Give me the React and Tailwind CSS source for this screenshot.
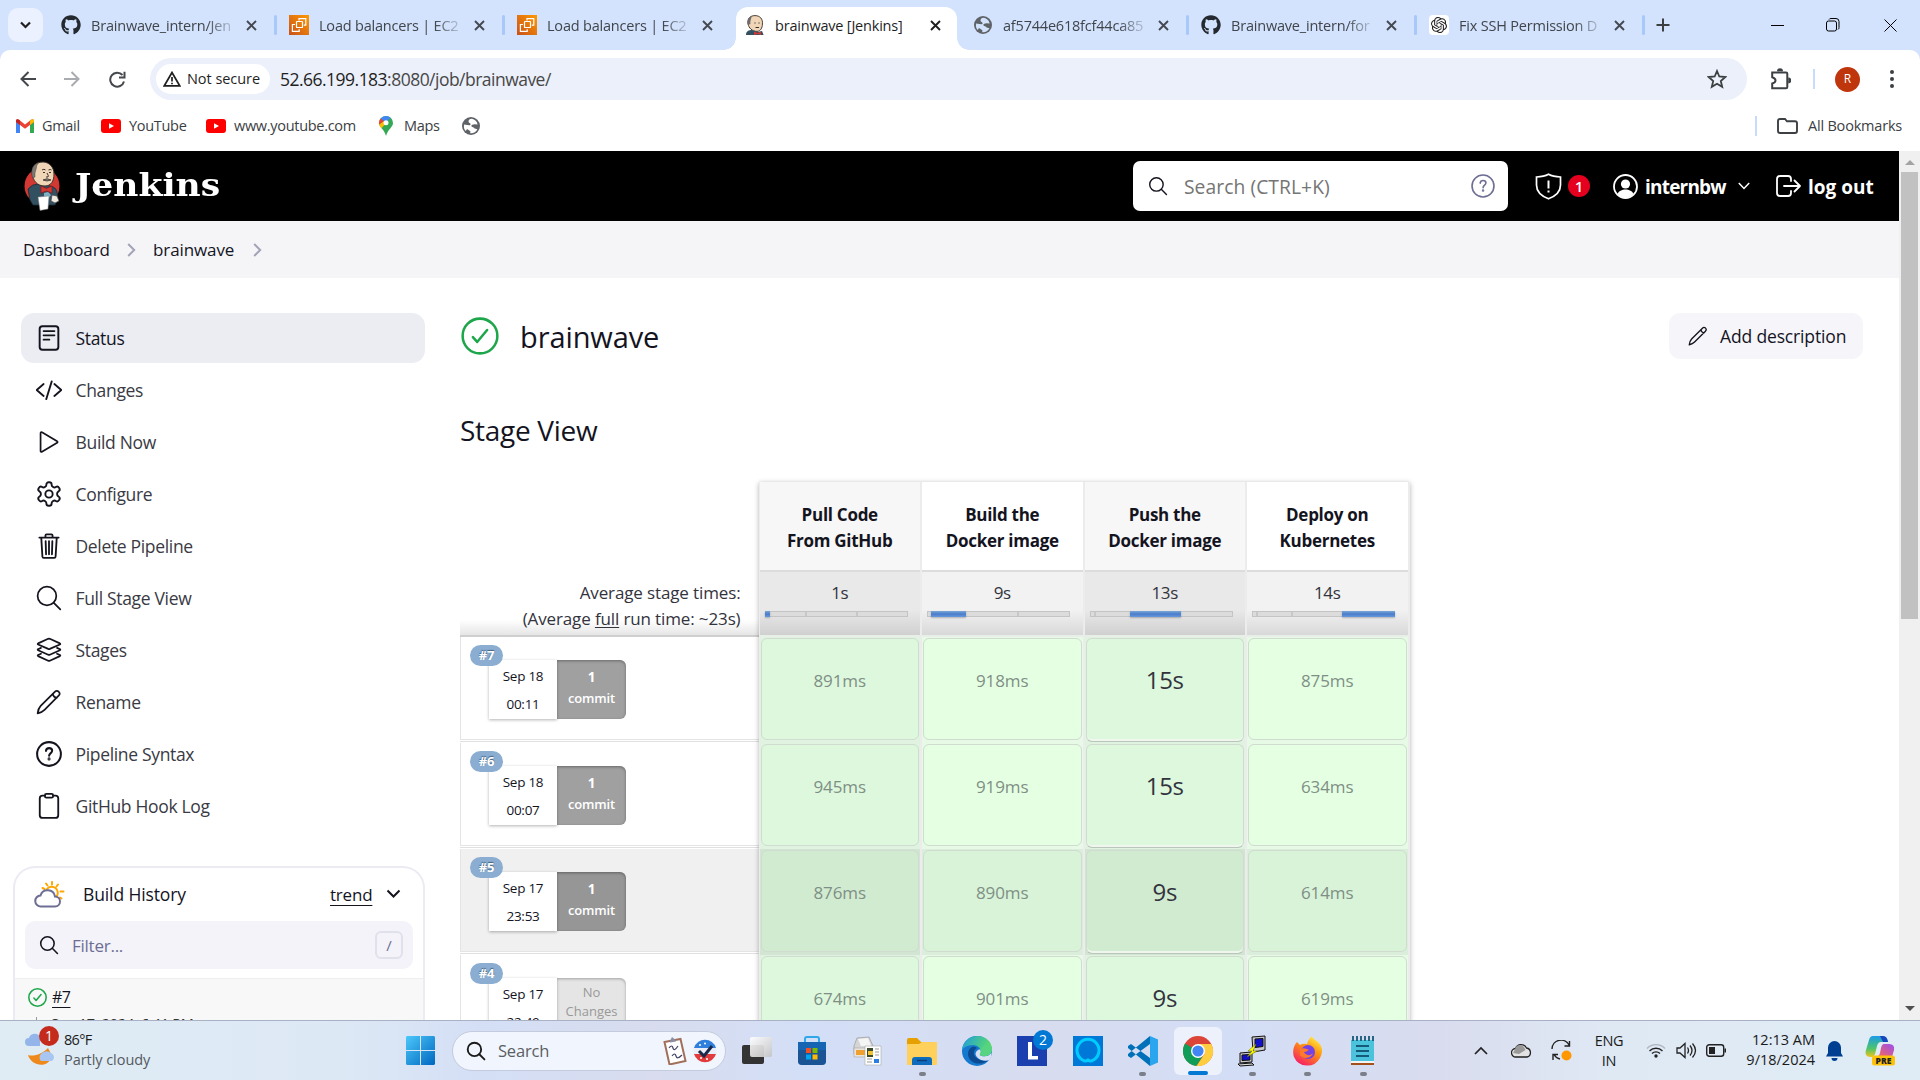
import React from "react";
import { SiOpenai } from "react-icons/si";
import { FaGithub } from "react-icons/fa";

/* ---------- shared bits ---------- */

const T = ({ c = "", children }) => <span className={`block shrink-0 whitespace-nowrap ${c}`}>{children}</span>;

const Line = ({ s = 26, w = 32, c = "", children }) => (
  <svg width={s} height={s} viewBox="0 0 512 512" fill="none" stroke="currentColor" strokeWidth={w} strokeLinecap="round" strokeLinejoin="round" className={`shrink-0 ${c}`}>
    {children}
  </svg>
);

const Pencil = ({ s, c }) => (
  <Line s={s} c={c} w={34}>
    <path d="M32 480c8-60 20-104 60-146L370 56c22-22 56-22 78-2 22 22 20 56-2 78L168 410c-40 40-80 56-136 70zM330 96c8 44 36 72 80 80" />
  </Line>
);
const Glass = ({ s, c, w }) => (
  <Line s={s} c={c} w={w}>
    <circle cx="216" cy="216" r="172" />
    <path d="M340 340l132 132" />
  </Line>
);
const Help = ({ s, c, w = 34 }) => (
  <Line s={s} c={c} w={w}>
    <circle cx="256" cy="256" r="234" />
    <path d="M196 196c4-40 36-56 62-56 32 0 60 20 60 54 0 44-60 46-60 98" />
    <circle cx="257" cy="352" r="10" fill="currentColor" />
  </Line>
);
const Check = ({ s, w = 32, c }) => (
  <Line s={s} w={w} c={c}>
    <circle cx="256" cy="256" r="234" />
    <path d="M352 176L217.6 336 160 272" />
  </Line>
);

/* ---------- tab strip ---------- */

const Aws = () => (
  <svg width="20" height="20" viewBox="0 0 20 20">
    <defs>
      <linearGradient id="aws" x1="0" y1="1" x2="1" y2="0">
        <stop offset="0" stopColor="#c8511b" />
        <stop offset="1" stopColor="#f90" />
      </linearGradient>
    </defs>
    <rect width="20" height="20" fill="url(#aws)" />
    <g fill="none" stroke="#fff" strokeWidth="1.2">
      <rect x="7.5" y="6.5" width="6" height="6" rx="0.6" />
      <path d="M10 5.5V3.6h6.8v6.6h-2M6 9.5H3.4v6.9h6.8v-2.2" />
    </g>
  </svg>
);

const Globe = ({ land = "#d3e3fd" }) => (
  <svg width="18" height="18" viewBox="0 0 18 18">
    <circle cx="9" cy="9" r="9" fill="#5f6368" />
    <path d="M9.8 1.8c-2.6.2-3.6 1.6-3.2 3.2.4 1.2 2 .8 2 2.2 0 1.2-2 1-3.4.8L2.2 7.4c-.8 2.8 0 5 1.6 6.600L5 12l3.400 2.200-.2 2c3 .4 5.800-1.200 7.200-4l-2.800-.6c-.6-1.600-2.400-1.200-3.200-2.400-.4-1.600 1.600-1.800 3.200-2l3 .2C15 4.400 13 2.400 9.800 1.800z" fill={land} />
  </svg>
);

const JenkinsHead = () => (
  <svg width="18" height="20" viewBox="0 0 18 20">
    <path d="M2 9C1 4 4 .6 9 .6S17 4 16.400 9c0 4-2 7.400-5.400 7.400C6 16.400 3 13 2 9z" fill="#f0d6b7" stroke="#4a3c33" strokeWidth="1" />
    <path d="M2 10C1 5 3 1.500 6 1 5 4 4 6 4.400 9z" fill="#6d6b6d" />
    <path d="M9 7.500v1M13 7.500v1M9.500 12.500h3.500" stroke="#333" strokeWidth="1.200" />
    <path d="M0 20c0-4 3-5 6-5l6 2 4-1 1.600 4z" fill="#335061" />
    <path d="M8 16.500l3.500 1.500 3.500-1.500v3.500l-3.500-1L8 20z" fill="#d33833" />
  </svg>
);

const XIcon = ({ c = "text-[#3c4043]" }) => (
  <svg width="11" height="11" viewBox="0 0 11 11" className={`shrink-0 ${c}`}>
    <path d="M1 1l9 9M10 1l-9 9" stroke="currentColor" strokeWidth="1.900" />
  </svg>
);

const tabs = [
  { icon: <FaGithub size={20} color="#24292f" />, text: "Brainwave_intern/Jen", sep: true },
  { icon: <Aws />, text: "Load balancers | EC2", sep: true },
  { icon: <Aws />, text: "Load balancers | EC2" },
  { icon: <JenkinsHead />, text: "brainwave [Jenkins]", active: true },
  { icon: <Globe />, text: "af5744e618fcf44ca85", sep: true },
  { icon: <FaGithub size={20} color="#24292f" />, text: "Brainwave_intern/for", sep: true },
  {
    icon: (
      <span className="flex h-5 w-5 items-center justify-center rounded bg-white">
        <SiOpenai size={16} color="#222" />
      </span>
    ),
    text: "Fix SSH Permission D",
    sep: true,
  },
];

function TabStrip() {
  return (
    <div className="flex h-[50px] shrink-0 items-center bg-[#d3e3fd]">
      <div className="ml-2 flex h-[34px] w-[35px] items-center justify-center rounded-[10px] bg-[#ebf1fe]">
        <svg width="11" height="8" viewBox="0 0 11 8">
          <path d="M1 1.500l4.500 4.500L10 1.500" fill="none" stroke="#1f1f1f" strokeWidth="2.200" />
        </svg>
      </div>
      <div className="ml-[6px] flex h-full">
        {tabs.map((t, i) => (
          <div key={i} className="relative flex h-full w-[228px] items-center">
            {t.active && (
              <>
                <div className="absolute bottom-0 left-[3px] h-[43px] w-[221px] rounded-t-[12px] bg-white" />
                <div className="absolute bottom-0 -left-[9px] h-3 w-3 bg-[radial-gradient(circle_at_0_0,#d3e3fd_11.500px,#fff_12px)]" />
                <div className="absolute bottom-0 left-[224px] h-3 w-3 bg-[radial-gradient(circle_at_100%_0,#d3e3fd_11.500px,#fff_12px)]" />
              </>
            )}
            <div className="relative ml-3 flex w-5 shrink-0 justify-center">{t.icon}</div>
            <div className={`relative ml-[10px] w-[141px] whitespace-nowrap pt-px text-[14.500px] leading-5 tracking-[-0.200px] ${t.active ? "text-[#1f1f1f]" : "text-[#41454b] [mask-image:linear-gradient(90deg,#000_82%,rgba(0,0,0,0.300)_97%)]"}`}>{t.text}</div>
            <div className="relative ml-[14px]">
              <XIcon c={t.active ? "text-[#1f1f1f]" : "text-[#45494f]"} />
            </div>
            {t.sep && <div className="ml-[17px] h-5 w-[3px] rounded bg-[#a8c7fa]" />}
          </div>
        ))}
      </div>
      <svg width="14" height="14" viewBox="0 0 14 14" className="ml-[11px]">
        <path d="M7 .5v13M.5 7h13" stroke="#3c4043" strokeWidth="2" />
      </svg>
      <div className="ml-auto flex items-center">
        <svg width="13" height="13" viewBox="0 0 13 13">
          <path d="M0 6.500h13" stroke="#000" />
        </svg>
        <svg width="14" height="14" viewBox="0 0 14 14" className="ml-[42px]" fill="none" stroke="#000">
          <rect x=".5" y="3" width="10" height="10" rx="2" />
          <path d="M3 1.500q.5-1 2-1h5q3 0 3 3v6q0 1.500-1 2" />
        </svg>
        <svg width="13" height="13" viewBox="0 0 13 13" className="mr-[23px] ml-[44px]">
          <path d="M.5.5l12 12M12.500.5l-12 12" stroke="#000" />
        </svg>
      </div>
    </div>
  );
}

/* ---------- toolbar & bookmarks ---------- */

function Toolbar() {
  return (
    <div className="shrink-0 bg-[#d3e3fd]">
      <div className="flex h-[58px] items-center rounded-t-[10px] bg-white text-[#44474b]">
        <svg width="16" height="16" viewBox="0 0 16 16" className="ml-5" fill="none" stroke="currentColor" strokeWidth="2">
          <path d="M16 8H1.500M8.500 1L1.500 8l7 7" />
        </svg>
        <svg width="16" height="16" viewBox="0 0 16 16" className="ml-[28px] text-[#a8abaf]" fill="none" stroke="currentColor" strokeWidth="2">
          <path d="M0 8h14.500M7.500 1l7 7-7 7" />
        </svg>
        <svg width="17" height="17" viewBox="0 0 17 17" className="ml-[29px]" fill="none" stroke="currentColor" strokeWidth="2">
          <path d="M15 10.500a7 7 0 11-1.500-6.500M15.500 .8v5.700H10" />
        </svg>
        <div className="ml-[24px] flex h-[42px] w-[1597px] items-center rounded-full bg-[#ecf0fa]">
          <div className="ml-[6px] flex h-[30px] w-[114px] items-center rounded-full bg-white">
            <svg width="18" height="16" viewBox="0 0 18 16" className="ml-[7px]" fill="none" stroke="#1f1f1f" strokeWidth="1.700">
              <path d="M9 1.500L1.300 14.800h15.400zM9 6v4.500M9 11.700v1.600" />
            </svg>
            <T c="ml-[6px] text-[14.500px] tracking-[-0.050px] text-[#1f1f1f]">Not secure</T>
          </div>
          <T c="ml-[10px] pt-px text-[17.500px] tracking-[-0.520px] text-[#474747]">
            <span className="text-[#1f1f1f]">52.66.199.183</span>:8080/job/brainwave/
          </T>
          <svg width="20" height="20" viewBox="0 0 20 20" className="mr-5 ml-auto" fill="none" stroke="#3c4043" strokeWidth="1.800">
            <path d="M10 2l2.300 5.500 6 .5-4.500 4 1.400 5.800L10 14.700l-5.200 3.100L6.200 12 1.700 8l6-.5z" />
          </svg>
        </div>
        <svg width="21" height="22" viewBox="0 0 21 22" className="ml-[23px]" fill="none" stroke="#3c4043" strokeWidth="2">
          <path d="M2.200 4.500H16q1.300 0 1.300 1.300V19q0 1.300-1.300 1.300H2.200V15.500q3.300-.8 3.300-3t-3.300-3.200z" />
          <path d="M8 3.300a2 2 0 014 0M18.300 10.500a2 2 0 010 4" fill="#3c4043" />
        </svg>
        <div className="ml-[22px] h-5 w-[2px] bg-[#c7dcfb]" />
        <div className="ml-5 flex h-[25px] w-[25px] items-center justify-center rounded-full bg-[#bf360c] text-[12px] text-white">R</div>
        <svg width="6" height="20" viewBox="0 0 6 20" className="ml-[29px]" fill="#3c4043">
          <circle cx="3" cy="3" r="2" />
          <circle cx="3" cy="10" r="2" />
          <circle cx="3" cy="17" r="2" />
        </svg>
      </div>
    </div>
  );
}

const YT = ({ c = "" }) => (
  <svg width="20" height="14" viewBox="0 0 20 14" className={`shrink-0 ${c}`}>
    <rect width="20" height="14" rx="3" fill="#f00" />
    <path d="M8 4.200v5.600L13 7z" fill="#fff" />
  </svg>
);

function Bookmarks() {
  return (
    <div className="flex h-[43px] shrink-0 items-center bg-white pb-[7px] text-[14.500px] leading-5 tracking-[-0.300px] text-[#3c4043]">
      <svg width="18" height="14" viewBox="0 0 18 14" className="ml-4">
        <path d="M0 1.500V14h4V6z" fill="#4285f4" />
        <path d="M18 1.500V14h-4V6z" fill="#34a853" />
        <path d="M0 1.500C0 .5 1.500-.5 3 .8l6 4.700 6-4.700C16.500-.5 18 .5 18 1.500V3L9 9.700 0 3z" fill="#ea4335" />
        <path d="M14 1.600l1-.8C16.500-.5 18 .5 18 1.500V3l-4 3z" fill="#fbbc04" />
        <path d="M0 1.500C0 .5 1.500-.5 3 .8l1 .8V6L0 3z" fill="#c5221f" />
      </svg>
      <T c="ml-2 w-[59px]">Gmail</T>
      <YT />
      <T c="ml-2 w-[77px]">YouTube</T>
      <YT />
      <T c="ml-2 w-[145px]">www.youtube.com</T>
      <svg width="14" height="20" viewBox="0 0 14 20">
        <path d="M0 7a7 7 0 0114 0c0 4-5 6-7 13C5 13 0 11 0 7z" fill="#34a853" />
        <path d="M7 0A7 7 0 001.600 2.500L7 7l4.500-5.400A7 7 0 007 0z" fill="#4285f4" />
        <path d="M1.600 2.500A7 7 0 00.200 8.500L5 5.300z" fill="#ea4335" />
        <path d="M.2 8.500c.4 1.500 1.300 2.600 2.300 3.800L9 5 5 5.300z" fill="#fbbc04" />
        <circle cx="7" cy="6.800" r="2.500" fill="#fff" />
      </svg>
      <T c="ml-[11px] w-[58px]">Maps</T>
      <Globe land="#fff" />
      <div className="ml-auto h-5 w-[2px] bg-[#c7dcfb]" />
      <svg width="21" height="16" viewBox="0 0 21 16" className="ml-5" fill="none" stroke="#3c4043" strokeWidth="1.900">
        <path d="M1 3q0-2 2-2h5l2 2.300h8q2 0 2 2V13q0 2-2 2H3q-2 0-2-2z" />
      </svg>
      <T c="ml-[10px] w-[112px] tracking-[-0.200px]">All Bookmarks</T>
    </div>
  );
}

/* ---------- Jenkins header ---------- */

const Mascot = () => (
  <svg width="36" height="50" viewBox="0 0 36 50">
    <ellipse cx="18" cy="25" rx="17.500" ry="18" fill="#d33833" />
    <path d="M4 28q4-5 10-5l12 2q6 1 7 6l1 6-3 7H9L6 39z" fill="#335061" stroke="#1d2b33" strokeWidth=".8" />
    <path d="M8 12C8 4 13 1 19 1s11 5 11 12-3 12-9 12C13 25 9 20 8 12z" fill="#f0d6b7" stroke="#3b3029" strokeWidth="1" />
    <path d="M8.500 17C6.500 8 9 3.500 15 1.600c-2 2-2.500 3-2.500 5L11 12v4z" fill="#7d7a76" stroke="#3b3029" strokeWidth=".4" />
    <path d="M18 9q2-1.500 3.500 0M24.500 9q2-1 3 0M19 11.500h2M25 11.500h2M23 12q2 3 1 4h-2" fill="none" stroke="#3b3029" strokeWidth="1" />
    <path d="M19 19q4-2.500 8 0-4 2-8 0z" fill="#8b8680" stroke="#3b3029" strokeWidth=".8" />
    <path d="M17 25l5.500 2.500L28 25v7l-5.500-2L17 32z" fill="#d33833" stroke="#811" strokeWidth=".6" />
    <path d="M20 32l4-1 3 3-3 4-4-2z" fill="#81b0c4" />
    <path d="M14 36l11-1-1 13-8 1.500z" fill="#fff" stroke="#777" strokeWidth=".5" />
    <path d="M28 34l5 1 2 5-4 2-4-2z" fill="#efe9e2" stroke="#444" strokeWidth=".7" />
  </svg>
);

function JenkinsHeader() {
  return (
    <div className="flex h-[70px] shrink-0 items-center bg-black text-white">
      <div className="ml-6">
        <Mascot />
      </div>
      <div className="ml-[15px] w-[1058px]">
        <T c="w-[136px] origin-left scale-x-[1.080] pb-[3px] font-['DejaVu_Serif'] text-[32px] font-bold">Jenkins</T>
      </div>
      <div className="flex h-[50px] w-[375px] items-center rounded-[7px] bg-white text-[#14141f]">
        <Glass s={20} w={36} c="ml-[15px]" />
        <T c="ml-[16px] pt-[3px] text-[19.300px] tracking-[0.050px] text-[#757575]">Search (CTRL+K)</T>
        <Help s={24} c="mr-[13px] ml-auto text-[#6e6e94]" />
      </div>
      <svg width="27" height="27" viewBox="0 0 27 27" className="ml-[27px]" fill="none" stroke="#fff" strokeWidth="1.700">
        <path d="M13.500 1.300Q9 3.800 1.500 4v8c0 7 6 11.500 12 13.800 6-2.300 12-6.800 12-13.800V4Q18 3.800 13.500 1.300z" />
        <path d="M13.500 7.500v8M13.500 17.500v2" strokeWidth="2" />
      </svg>
      <div className="ml-[6px] flex h-[22px] w-[22px] items-center justify-center rounded-full bg-[#e6001f] text-[15px] font-semibold">1</div>
      <svg width="25" height="25" viewBox="0 0 25 25" className="ml-[23px]">
        <circle cx="12.500" cy="12.500" r="11.500" fill="none" stroke="#fff" strokeWidth="1.800" />
        <circle cx="12.500" cy="10" r="4.600" fill="#fff" />
        <path d="M4.500 20c2-6 14-6 16 0a11 11 0 01-16 0z" fill="#fff" />
      </svg>
      <T c="ml-[7px] w-[93px] pt-[2px] text-[19px] font-bold tracking-[-0.800px]">internbw</T>
      <svg width="12" height="8" viewBox="0 0 12 8" fill="none" stroke="#fff" strokeWidth="1.500">
        <path d="M.8 1L6 6.500 11.200 1" />
      </svg>
      <svg width="25" height="22" viewBox="0 0 25 22" className="ml-[26px]" fill="none" stroke="#fff" strokeWidth="1.800" strokeLinecap="round" strokeLinejoin="round">
        <path d="M15 6V4q0-3-3-3H4Q1 1 1 4v14q0 3 3 3h8q3 0 3-3v-2M8 11h16M18.500 5.500L24 11l-5.500 5.500" />
      </svg>
      <T c="ml-[7px] pt-[2px] text-[19px] font-bold">log out</T>
    </div>
  );
}

const Crumb = () => (
  <svg width="9" height="14" viewBox="0 0 9 14" fill="none" stroke="#a3a3b8" strokeWidth="2">
    <path d="M1.200 1l6 6-6 6" />
  </svg>
);

/* ---------- sidebar ---------- */

const nav = [
  ["Status", <Line w={38}><rect x="72" y="26" width="368" height="460" rx="54" /><path d="M150 120h212M150 204h212M150 288h112" /></Line>],
  ["Changes", <Line w={36}><path d="M150 374L14 256l136-118M362 374l136-118-136-118M310 86l-108 350" /></Line>],
  ["Build Now", <Line w={34}><path d="M90 81v350c0 16 14 26 28 17l298-176c12-7 12-25 0-32L118 64c-14-9-28 1-28 17z" /></Line>],
  ["Configure", <svg width="26" height="26" viewBox="1 1 22 22" fill="none" stroke="currentColor" strokeWidth="1.600"><path d="M12.220 2h-.44a2 2 0 0 0-2 2v.18a2 2 0 0 1-1 1.730l-.43.250a2 2 0 0 1-2 0l-.15-.08a2 2 0 0 0-2.730.73l-.22.380a2 2 0 0 0 .73 2.730l.15.100a2 2 0 0 1 1 1.720v.510a2 2 0 0 1-1 1.740l-.15.090a2 2 0 0 0-.73 2.730l.22.380a2 2 0 0 0 2.730.73l.15-.08a2 2 0 0 1 2 0l.43.250a2 2 0 0 1 1 1.730V20a2 2 0 0 0 2 2h.44a2 2 0 0 0 2-2v-.18a2 2 0 0 1 1-1.730l.43-.25a2 2 0 0 1 2 0l.15.080a2 2 0 0 0 2.730-.73l.22-.39a2 2 0 0 0-.73-2.730l-.15-.08a2 2 0 0 1-1-1.740v-.5a2 2 0 0 1 1-1.740l.15-.09a2 2 0 0 0 .73-2.730l-.22-.38a2 2 0 0 0-2.730-.73l-.15.080a2 2 0 0 1-2 0l-.43-.25a2 2 0 0 1-1-1.730V4a2 2 0 0 0-2-2z" /><circle cx="12" cy="12" r="3.100" /></svg>],
  ["Delete Pipeline", <Line w={36}><path d="M104 96l22 366c1 18 12 28 28 28h204c16 0 27-10 28-28l22-366M66 90h380M186 88V48c0-14 10-22 22-22h96c12 0 22 8 22 22v40M256 160v260M190 160l8 260M322 160l-8 260" /></Line>],
  ["Full Stage View", <Line w={34}><circle cx="216" cy="216" r="184" /><path d="M350 350l128 128" /></Line>],
  ["Stages", <Line w={34}><path d="M470 126L272 36c-10-4-22-4-32 0L42 126c-12 6-12 14 0 20l198 88c10 4 22 4 32 0l198-88c12-6 12-14 0-20zM42 238l-4 4c-8 6-6 12 4 18l198 88c10 4 22 4 32 0l198-88c10-6 12-12 4-18l-60-28M98 214l-60 28M98 330l-56 26c-12 6-12 14 0 20l198 90c10 4 22 4 32 0l198-90c12-6 12-14 0-20l-56-26" /></Line>],
  ["Rename", <Pencil s={26} />],
  ["Pipeline Syntax", <Help s={26} w={40} />],
  ["GitHub Hook Log", <Line w={36}><path d="M176 50h-48c-30 0-54 22-54 52v334c0 30 24 54 54 54h256c30 0 54-24 54-54V102c0-30-24-52-54-52h-48" /><rect x="176" y="18" width="160" height="72" rx="28" /></Line>],
];

function Sidebar() {
  return (
    <div className="flex w-[425px] shrink-0 flex-col text-[#14141f]">
      <nav className="ml-[21px] mt-[35px] flex flex-col gap-[2px]">
        {nav.map(([label, icon], i) => (
          <div key={label} className={`flex h-[50px] items-center rounded-[13px] pl-[15px] ${i === 0 ? "bg-[#ecedf3]" : ""}`}>
            {icon}
            <T c={`ml-[13.500px] pt-px text-[17.500px] tracking-[-0.330px] ${i === 0 ? "font-medium" : "text-[#3a3a44]"}`}>{label}</T>
          </div>
        ))}
      </nav>
      <div className="ml-[13px] mt-[35px] h-[200px] rounded-t-[22px] border-2 border-b-0 border-[#ebebf3]">
        <div className="flex h-[52px] items-center">
          <svg width="31" height="27" viewBox="0 0 31 27" className="ml-[19px]" fill="none" strokeWidth="2" strokeLinecap="round">
            <g stroke="#fea700">
              <path d="M13 8a6 6 0 019.500 7.500M18 1v2.500M12 2.500l1.500 2M8.500 7l2 1M24 3.500l-1.500 2M29.500 10.500h-3M26 16.500l1.500 1" />
            </g>
            <path d="M7 25.500a5.500 5.500 0 01-.5-11A7.500 7.500 0 0121 15.500a5 5 0 010 10z" stroke="#6e6e94" />
          </svg>
          <T c="ml-[18px] w-[247px] pt-px text-[17.500px] font-medium tracking-[-0.120px]">Build History</T>
          <T c="w-[43px] pt-px text-[17px] font-medium tracking-[-0.200px] underline decoration-1 underline-offset-4">trend</T>
          <svg width="15" height="10" viewBox="0 0 15 10" className="ml-[13px]" fill="none" stroke="#14141f" strokeWidth="2">
            <path d="M1.500 1.500l6 6 6-6" />
          </svg>
        </div>
        <div className="ml-[10px] mt-[1px] flex h-[48px] w-[388px] items-center rounded-[10px] bg-[#f3f3f9]">
          <Glass s={20} w={40} c="ml-[14px]" />
          <T c="ml-[13px] pt-px text-[17px] font-medium tracking-[-0.250px] text-[#6e6e94]">Filter...</T>
          <div className="mr-[10px] ml-auto flex h-7 w-7 items-center justify-center rounded-md border-2 border-[#e1e1ec] text-[15px] text-[#6e6e94]">/</div>
        </div>
        <div className="mt-[9px] h-[60px] border-t border-[#eee] bg-[#f8f8f8] pl-[13px] pt-[6px]">
          <div className="flex h-6 items-center">
            <Check s={19} w={42} c="text-[#1ea64b]" />
            <T c="ml-[5px] text-[16px] font-medium tracking-[-0.500px] underline decoration-1 underline-offset-4">#7</T>
          </div>
          <div className="mt-[5px] flex items-start">
            <div className="ml-[8px] mt-[3px] h-3 w-[1px] bg-[#999]" />
            <T c="ml-[14px] text-[14.500px] leading-5 tracking-[-0.250px] text-[#333]">Sep 17, 2024, 6:41 PM</T>
          </div>
        </div>
      </div>
    </div>
  );
}

/* ---------- stage view ---------- */

const stages = [
  { name: ["Pull Code", "From GitHub"], avg: "1s", from: 0, len: 5, ticks: [40, 91] },
  { name: ["Build the", "Docker image"], avg: "9s", from: 4, len: 35, ticks: [90] },
  { name: ["Push the", "Docker image"], avg: "13s", from: 40, len: 51, ticks: [4] },
  { name: ["Deploy on", "Kubernetes"], avg: "14s", from: 90, len: 53, ticks: [4, 39] },
];

const runs = [
  { id: "#7", day: "Sep 18", time: "00:11", commit: true, cells: ["891ms", "918ms", "15s", "875ms"] },
  { id: "#6", day: "Sep 18", time: "00:07", commit: true, cells: ["945ms", "919ms", "15s", "634ms"] },
  { id: "#5", day: "Sep 17", time: "23:53", commit: true, hover: true, cells: ["876ms", "890ms", "9s", "614ms"] },
  { id: "#4", day: "Sep 17", time: "22:49", cells: ["674ms", "901ms", "9s", "619ms"] },
];

const RunInfo = ({ r }) => (
  <div className="h-[106px] pb-px">
    <div className={`flex h-[103px] flex-col border border-r-0 border-t-0 border-[#e4e4e4] pl-[9px] pt-[8px] ${r.hover ? "bg-[#f0f0f0]" : "bg-white"}`}>
      <div className="relative z-10 flex h-[21px] w-[33px] shrink-0 items-center justify-center rounded-full bg-[#8aadd1] text-[13px] font-bold tracking-[-0.200px] text-white [text-shadow:0_-1px_1px_#44607f]">{r.id}</div>
      <div className="-mt-[6px] ml-[19px] flex h-[59px] shrink-0">
        <div className="w-[68px] bg-white pt-[2px] text-center text-[13.500px] leading-[28px] tracking-[-0.250px] shadow-[0_1px_3px_rgba(0,0,0,0.300)]">
          <div>{r.day}</div>
          <div>{r.time}</div>
        </div>
        {r.commit ? (
          <div className={`w-[69px] rounded-r-[6px] pt-[7px] text-center text-[13.500px] font-bold leading-[21px] text-white shadow-[inset_0_1px_3px_rgba(0,0,0,0.350)] ${r.hover ? "bg-[#969696]" : "bg-[#a0a0a0]"}`}>
            <div>1</div>
            <div className="text-[13px] font-semibold tracking-[-0.200px]">commit</div>
          </div>
        ) : (
          <div className="w-[69px] rounded-r-[6px] bg-[#e5e5e5] pt-[5px] text-center text-[13px] leading-[19px] text-[#999] shadow-[inset_0_1px_3px_rgba(0,0,0,0.300)]">
            No
            <br />
            Changes
          </div>
        )}
      </div>
    </div>
    <div className="mt-px h-px bg-[#e0e0e0]" />
  </div>
);

const Bar = ({ s }) => (
  <div className="relative mt-[6px] ml-[5px] h-[6px] w-[143px] border border-[#c4c4c4] bg-[#dcdcdc]">
    {s.ticks.map((x) => (
      <div key={x} className="absolute top-0 h-full w-[2px] bg-[#c8c8c8]" style={{ left: x - 1 }} />
    ))}
    <div className="absolute -top-[1px] h-[6px] bg-linear-to-b from-[#7ba7d6] via-[#4a7ccb] to-[#6699dd] shadow-[0_1px_2px_rgba(0,0,0,0.250)]" style={{ left: s.from - 1, width: s.len }} />
  </div>
);

const StageColumn = ({ s, i }) => {
  const odd = i % 2 === 0;
  return (
    <div className="flex w-[162.500px] flex-col border-r-2 border-[#ececec]">
      <div className={`flex h-[90px] flex-col items-center justify-center border-b-2 border-[#dcdcdc] pt-[4px] text-center text-[17px] font-bold leading-[26px] tracking-[-0.280px] ${odd ? "bg-[#f7f7f7]" : "bg-white"}`}>
        <div>{s.name[0]}</div>
        <div>{s.name[1]}</div>
      </div>
      <div className={`h-[63px] pt-[9px] ${odd ? "bg-linear-to-b from-[#e9e9e9] from-60% to-[#d0d0d0]" : "bg-linear-to-b from-[#f2f2f2] from-60% to-[#d8d8d8]"}`}>
        <div className="text-center text-[17px] leading-[24px] tracking-[-0.300px] text-[#33333d]">{s.avg}</div>
        <Bar s={s} />
      </div>
      <div className="h-[2px] bg-[#e8eee8]" />
      {runs.map((r) => {
        const big = i === 2;
        const outer = r.hover ? (odd ? "bg-[#d2e4d2]" : "bg-[#dbeedb]") : odd ? "bg-[#e0f3e0]" : "bg-[#e6fae6]";
        const inner = r.hover ? (odd ? "bg-[#d1ebd1]" : "bg-[#d8f3d8]") : odd ? "bg-[#ddf8dd]" : "bg-[#e5ffe3]";
        return (
          <div key={r.id} className={`h-[106px] pl-[1px] pr-[1px] pt-[1px] ${outer}`}>
            <div className={`flex items-center justify-center rounded-[6px] border border-[#cfdccf] ${big ? "h-[104px] border-b-[#b9c6b9] pb-[20px] text-[24px] tracking-[-0.300px] text-[#33333d] shadow-[inset_0_-2px_0_#eef6ee]" : "h-[102px] pb-[17px] text-[17px] tracking-[-0.100px] text-[#7f8f85]"} ${inner}`}>{r.cells[i]}</div>
          </div>
        );
      })}
    </div>
  );
};

function StageView() {
  return (
    <div className="mt-[34px] flex text-[#14141f]">
      <div className="w-[298.500px] shrink-0 pt-[92px]">
        <div className="h-[61px] bg-linear-to-b from-white from-75% to-[#e6e6e6] pr-[18px] pt-[6px] text-right text-[17px] leading-[26px] tracking-[-0.130px] text-[#33333d]">
          <div>Average stage times:</div>
          <div>
            (Average <span className="underline decoration-1 underline-offset-2">full</span> run time: ~23s)
          </div>
        </div>
        <div className="h-[2px] bg-[#cfcfcf]" />
        {runs.map((r) => (
          <RunInfo key={r.id} r={r} />
        ))}
      </div>
      <div className="flex border-l border-[#ececec] shadow-[0_1px_5px_rgba(0,0,0,0.300)]">
        {stages.map((s, i) => (
          <StageColumn key={i} s={s} i={i} />
        ))}
      </div>
    </div>
  );
}

function Page() {
  return (
    <div className="flex min-h-0 flex-1">
      <div className="flex w-[1899px] flex-col overflow-hidden bg-white">
        <JenkinsHeader />
        <div className="flex h-[57px] shrink-0 items-center bg-[#f5f5f8] text-[17px] font-medium tracking-[-0.100px] text-[#14141f]">
          <T c="ml-[23px] w-[104px]">Dashboard</T>
          <Crumb />
          <T c="ml-[17px] w-[100px]">brainwave</T>
          <Crumb />
        </div>
        <div className="flex h-[742px] shrink-0">
          <Sidebar />
          <div className="ml-[35px] flex-1">
            <div className="mt-[35px] flex h-[46px] items-center text-[#14141f]">
              <Check s={38} w={34} c="ml-px text-[#1ea64b]" />
              <T c="ml-[21px] pt-[2px] text-[29px] font-medium tracking-[-0.100px]">brainwave</T>
              <div className="mr-[36px] ml-auto flex h-[46px] w-[194px] items-center rounded-[11px] bg-[#f6f6fa]">
                <Pencil s={20} c="ml-[19px]" />
                <T c="ml-[12px] pt-px text-[17.500px] font-medium tracking-[-0.150px]">Add description</T>
              </div>
            </div>
            <T c="mt-[51px] h-[38px] text-[28px] font-medium leading-[40px] tracking-[-0.300px] text-[#14141f]">Stage View</T>
            <StageView />
          </div>
        </div>
      </div>
      <div className="flex flex-1 flex-col items-center bg-[#f0f0f0]">
        <div className="mt-[9px] h-0 w-0 border-x-[5px] border-b-[5px] border-x-transparent border-b-[#a3a3a3]" />
        <div className="mt-[7px] h-[447px] w-[17px] bg-[#c1c1c1]" />
        <div className="mt-auto mb-[9px] h-0 w-0 border-x-[5px] border-t-[5px] border-x-transparent border-t-[#505050]" />
      </div>
    </div>
  );
}

/* ---------- taskbar ---------- */

const I = ({ children }) => (
  <svg width="30" height="30" viewBox="0 0 30 30" className="overflow-visible">
    {children}
  </svg>
);

const apps = [
  { icon: <I><defs><linearGradient id="tv" x1="0" y1="0" x2="1" y2="1"><stop offset="0" stopColor="#fff" /><stop offset="1" stopColor="#c4c4c4" /></linearGradient></defs><rect x="0" y="9" width="22" height="19" rx="2" fill="#333" /><rect x="8" y="1" width="22" height="20" rx="2" fill="url(#tv)" opacity=".93" /></I> },
  { icon: <I><path d="M8 6V3q0-2 2-2h10q2 0 2 2v3" fill="none" stroke="#2fa8ea" strokeWidth="2" /><path d="M1 6h28v19q0 4-4 4H5q-4 0-4-4z" fill="#1565b3" /><path d="M1 14h28v11q0 4-4 4H5q-4 0-4-4z" fill="#1f4a80" opacity=".6" /><path d="M9 12h5v5H9z" fill="#f25022" /><path d="M15.500 12h5v5h-5z" fill="#7fba00" /><path d="M9 18.500h5v5H9z" fill="#00a4ef" /><path d="M15.500 18.500h5v5h-5z" fill="#ffb900" /></I> },
  { icon: <I><path d="M5 2l12-1 4 9v8H2V10z" fill="#d5d5d5" stroke="#999" strokeWidth=".7" /><path d="M6 3l10-1 3 8H9z" fill="#f5f5f5" /><path d="M2 12h13v9H2z" fill="#e9e4dc" stroke="#999" strokeWidth=".5" /><path d="M4 14h10v5H4z" fill="#f0a030" /><path d="M13 10h16v19H13z" fill="#fff" stroke="#aaa" strokeWidth=".6" /><path d="M15 12h6v9h-6z" fill="#3a4a2a" /><path d="M16 15h5v4h-5z" fill="#f1c232" /><path d="M23 13h4M23 16h4M23 19h4M15 23h5M15 26h5" stroke="#999" /><path d="M22 23h5v4h-5z" fill="#2a7de1" /></I> },
  { icon: <I><path d="M0 4q0-2 2-2h8l4 4H30v6H0z" fill="#e6a000" /><path d="M0 9q0-1 1-1h11l3-2h15v22q0 1-1 1H1q-1 0-1-1z" fill="#ffd05b" /><path d="M5 29v-5q0-3 3-3h14q3 0 3 3v5z" fill="#0f6cbd" /><path d="M10 24.500h10" stroke="#0a3f78" strokeWidth="1.500" /></I>, dot: true },
  { icon: <I><defs><linearGradient id="eg" x1="0" y1="0" x2="1" y2=".3"><stop offset="0" stopColor="#1f9be0" /><stop offset="1" stopColor="#5bdc6a" /></linearGradient></defs><circle cx="15" cy="15" r="15" fill="#1479cf" /><path d="M0 14C1 5 8 0 15 0c9 0 15 6 15 13 0 5-4 7-8 7-3 0-5-1-4-3 2-4-2-8-7-8C5 9 1 12 0 14z" fill="url(#eg)" /><path d="M10 11c-4 2-5 7-3 11 3 6 12 8 20 2-6 2-14-1-15-6-.5-3 1-5 3-6-1-1-3-1.500-5-1z" fill="#0c4b91" /><path d="M18.500 16.500c-2 3 1 4 4 3.800 3 0 5-1 7-3.500 0 4-1 6-2.500 7.500-6 1.500-12-1-13.500-6 0-2.500 2-4.500 4-5 1 1 1.500 2 1 3.200z" fill="#d9e0f3" /><path d="M18.500 13c1 1 1.200 2.500 0 4-1 2 1 3.200 4 3.200 4 0 7.500-2.700 7.500-7.200l-4-6z" fill="#57d482" /></I> },
  { icon: <I><rect width="30" height="30" fill="#1b3fae" /><path d="M11 6h4v14h6v3.500H11z" fill="#fff" /><circle cx="26" cy="4" r="10" fill="#0078d4" /><text x="26" y="9" textAnchor="middle" fontSize="14" fill="#fff">2</text></I> },
  { icon: <I><rect width="30" height="30" fill="#0078d7" /><path d="M11.500 25.300A11 11 0 1118.500 25.300C17 26 15 24.500 15 24.500s-2 1.500-3.500.8z" fill="none" stroke="#0cf" strokeWidth="3" transform="translate(0 -.5)" /></I> },
  { icon: <I><path d="M22 0v8L3 22 0 20v-2zM22 30v-8L3 8 0 10v2z" fill="#0070b8" /><path d="M22 0l8 3.500v23L22 30z" fill="#2aa5ee" /></I>, dot: true },
  { icon: <I><circle cx="15" cy="15" r="15" fill="#db4437" /><path d="M15 15L2 7.500A15 15 0 0013.500 30l7-11.500z" fill="#0f9d58" /><path d="M15 8h13.300A15 15 0 0113.500 30l8-12z" fill="#ffcd40" /><circle cx="15" cy="15" r="7" fill="#fff" /><circle cx="15" cy="15" r="5.600" fill="#4285f4" /></I>, active: true },
  { icon: <I><g stroke="#111" strokeWidth="1"><path d="M14 1l13-1v14l-12 2z" fill="#c8c8c8" /><path d="M17 3l8-.5v8l-8 1z" fill="#11c" /><path d="M2 17l12-1v10l-12 1z" fill="#c8c8c8" /><path d="M4 19l8-.5v5.500l-8 .5z" fill="#11c" /><path d="M0 28l14-1 2 2-14 1z" fill="#ddd" /></g><path d="M18 8l-8 7h4l-5 6 10-6h-4z" fill="#ff0" stroke="#660" strokeWidth=".5" /></I>, dot: true },
  { icon: <I><defs><linearGradient id="ff" x1=".8" y1="0" x2=".2" y2="1"><stop offset="0" stopColor="#fff44f" /><stop offset=".4" stopColor="#ff980e" /><stop offset="1" stopColor="#f5156c" /></linearGradient></defs><path d="M4 6l3 3q3-2 7-1c1-4 3-6 5-8 0 3 7 5 9 10 2 4 1 8-1 12A14.500 14.500 0 011 21C-1 15 1 9 4 6z" fill="url(#ff)" /><circle cx="15" cy="16" r="7" fill="#7542e5" /><path d="M7 13c4-2 7 0 9 1-2 1-3 2-5 2 2 4 7 4 9 1-1 5-10 7-13 2z" fill="#ff7a2a" /></I>, dot: true },
  { icon: <I><path d="M3 4h23v22H3z" fill="#4cc3dc" /><path d="M3 26h23v3H3z" fill="#a3501a" /><path d="M3 25h23v2H3z" fill="#f3f3f3" /><path d="M5 0v5M9 0v5M13 0v5M17 0v5M21 0v5M25 0v5" stroke="#155a78" strokeWidth="1.800" /><path d="M8 10h13M8 15h13M8 20h13" stroke="#155a78" strokeWidth="1.800" /></I>, dot: true },
];

function Taskbar() {
  return (
    <div className="flex h-[60px] shrink-0 items-center border-t border-[#a9b1c4] bg-[linear-gradient(90deg,#dfecf4_0%,#dde8f5_18%,#d4dff6_25%,#d8dcee_34%,#d3dff7_42%,#d8dcef_55%,#d3def6_64%,#d9dcee_75%,#dfe9f4_84%,#dfecf5_100%)] text-[#1b1b1b]">
      <svg width="36" height="36" viewBox="0 0 36 36" className="ml-[25px] mb-[4px] overflow-visible">
        <path d="M4 15a4 4 0 010-8 6 6 0 0111-1v9z" fill="#93b5ea" />
        <path d="M3 24c6 2 14-1 20-7 2 4 5 8 3 11-6 10-20 6-23-4z" fill="#f0891c" />
        <path d="M16 30a5 5 0 010-7 7 7 0 0110-1 4.500 4.500 0 011 8z" fill="#a9c6f2" />
        <circle cx="24" cy="5" r="10" fill="#c42b1c" />
        <text x="24" y="10" textAnchor="middle" fontSize="14" fill="#fff">1</text>
      </svg>
      <div className="ml-[3px] w-[342px] pb-[2px] text-[14.500px] leading-[20px]">
        <T c="tracking-[-0.700px]">86°F</T>
        <T c="tracking-[-0.050px] text-[#55595f]">Partly cloudy</T>
      </div>
      <svg width="29" height="29" viewBox="0 0 29 29">
        <defs>
          <linearGradient id="win" x1="0" y1="0" x2="1" y2="1">
            <stop offset="0" stopColor="#4cc8fa" />
            <stop offset="1" stopColor="#0067c0" />
          </linearGradient>
        </defs>
        <path d="M1 0h13v14H0V1zM15 0h13l1 1v13H15zM0 15h14v14H1l-1-1zM15 15h14v13l-1 1H15z" fill="url(#win)" />
      </svg>
      <div className="ml-[17px] flex h-[40px] w-[274px] items-center rounded-full border border-[#c3cbdc] bg-[#f1f5fd]">
        <Glass s={20} w={48} c="ml-[13px]" />
        <T c="ml-[12px] w-[165px] pt-px text-[16.500px] tracking-[-0.200px] text-[#5b5e63]">Search</T>
        <svg width="24" height="29" viewBox="0 0 24 29">
          <path d="M1.500 6l16-3 5 22-16 3.500z" fill="#fff" stroke="#a2705a" strokeWidth="2" />
          <path d="M7 5l2-4 3 2.500 1 2-6 1z" fill="#8a8fa5" />
          <path d="M6 12q3-4 4 0t5-2M9 20q3-4 4 0t6-1" fill="none" stroke="#446" strokeWidth="1.200" />
        </svg>
        <svg width="24" height="24" viewBox="0 0 24 24" className="ml-[6px]">
          <circle cx="12" cy="12" r="11.500" fill="#e9eef8" />
          <path d="M1 9a11.500 11.500 0 0122 0z" fill="#2f7fdc" />
          <path d="M1 15a11.500 11.500 0 0022 0z" fill="#e23b3b" />
          <circle cx="7" cy="6" r="1" fill="#fff" />
          <circle cx="12" cy="4.500" r="1" fill="#fff" />
          <circle cx="8" cy="19" r="1" fill="#fff" />
          <circle cx="14" cy="20" r="1" fill="#fff" />
          <path d="M6 12l5 5 8-10" fill="none" stroke="#1b2a4a" strokeWidth="3" />
        </svg>
      </div>
      <div className="ml-[7px] flex gap-[7.100px]">
        {apps.map((a, i) => (
          <div key={i} className={`relative flex h-12 w-12 items-center justify-center rounded-md ${a.active ? "bg-[#edf1fb]" : ""}`}>
            {a.icon}
            {a.dot && <div className="absolute -bottom-px h-1 w-[7px] rounded-full bg-[#7b7f8a]" />}
            {a.active && <div className="absolute bottom-0 h-1 w-5 rounded-full bg-[#0078d4]" />}
          </div>
        ))}
      </div>
      <svg width="14" height="9" viewBox="0 0 14 9" className="ml-[87px]" fill="none" stroke="#222" strokeWidth="1.700">
        <path d="M1 8l6-6 6 6" />
      </svg>
      <svg width="21" height="15" viewBox="0 0 21 15" className="ml-[23px]">
        <path d="M5 14a4 4 0 01-.5-8.500A6 6 0 0115.500 5a4.600 4.600 0 01.5 9z" fill="#e3e3e3" stroke="#222" strokeWidth="1.300" />
        <path d="M4 6.500a5 5 0 019-2.500l1.500 3L8 11 2 10z" fill="#999" />
      </svg>
      <svg width="21" height="21" viewBox="0 0 21 21" className="ml-[19px]" fill="none" stroke="#222" strokeWidth="1.400">
        <path d="M1 9A9 9 0 0118 5M18.500 1v5h-5M9 19a9 9 0 01-6-4.500M2 20v-5.500h5" />
        <circle cx="15.500" cy="15.500" r="5" fill="#ff9800" stroke="none" />
      </svg>
      <div className="ml-[16px] w-[42px] text-center text-[14.500px] leading-[20px] tracking-[-0.300px]">
        ENG
        <br />
        IN
      </div>
      <svg width="20" height="15" viewBox="0 0 20 15" className="ml-[16px]" fill="none" stroke="#222" strokeWidth="1.400">
        <path d="M1 5.500a12.500 12.500 0 0118 0" stroke="#aeb4c0" />
        <path d="M3.500 8a9.200 9.200 0 0113 0M6 10.500a5.800 5.800 0 018 0" />
        <circle cx="10" cy="13" r="1.700" fill="#222" stroke="none" />
      </svg>
      <svg width="21" height="17" viewBox="0 0 21 17" className="ml-[10px]" fill="none" stroke="#222" strokeWidth="1.300">
        <path d="M1 6v5h3l5 4.500v-14L4 6zM11.500 5.500q2 3 0 6M14 3.500q4 5 0 10M16.500 1.500q6 7 0 14" />
      </svg>
      <svg width="21" height="13" viewBox="0 0 21 13" className="ml-[9px]">
        <rect x=".7" y=".7" width="17" height="11.600" rx="2.500" fill="none" stroke="#222" strokeWidth="1.400" />
        <rect x="3" y="3" width="6" height="7" fill="#222" />
        <path d="M18.500 4.500h1.500v4h-1.500z" fill="#222" />
      </svg>
      <div className="ml-[8px] w-[80px] pb-[2px] text-right text-[14.500px] leading-[20px] whitespace-nowrap">
        12:13 AM
        <br />
        9/18/2024
      </div>
      <svg width="17" height="20" viewBox="0 0 17 20" className="ml-[11px]" fill="#003e92">
        <path d="M8.500 0a6.500 6.500 0 016.500 6.500V12l2 3.500H0L2 12V6.500A6.500 6.500 0 018.500 0zM5.500 17h6a3 3 0 01-6 0z" />
      </svg>
      <svg width="30" height="30" viewBox="0 0 30 30" className="ml-[22px] shrink-0">
        <defs>
          <linearGradient id="cpa" x1="0" y1="0" x2="0" y2="1">
            <stop offset="0" stopColor="#1b9be8" />
            <stop offset=".6" stopColor="#4ec46a" />
            <stop offset="1" stopColor="#f0c419" />
          </linearGradient>
          <linearGradient id="cpb" x1="1" y1="0" x2="0" y2="1">
            <stop offset="0" stopColor="#9a4df0" />
            <stop offset="1" stopColor="#ff6a4d" />
          </linearGradient>
        </defs>
        <path d="M8 0h10q4 0 5 6H16q-3 0-4 4l-2 8q-1 3-4 3-7 0-5-7L4 4q1-4 4-4z" fill="url(#cpa)" />
        <path d="M15 0h3q4 0 5 6h-5z" fill="#1746c0" />
        <path d="M19 8h5q6 0 5 6l-2 7H10q4 0 5-4l1-5q1-4 3-4z" fill="url(#cpb)" />
        <rect x="7" y="19.500" width="23" height="10" rx="2.500" fill="#fdc30a" />
        <text x="18.500" y="27.500" textAnchor="middle" fontSize="8.500" fontWeight="800" fill="#222">PRE</text>
      </svg>
    </div>
  );
}

export default function App() {
  return (
    <div className="flex h-[1080px] w-[1920px] flex-col overflow-hidden bg-white font-['Open_Sans','Noto_Sans',sans-serif]">
      <TabStrip />
      <Toolbar />
      <Bookmarks />
      <Page />
      <Taskbar />
    </div>
  );
}
